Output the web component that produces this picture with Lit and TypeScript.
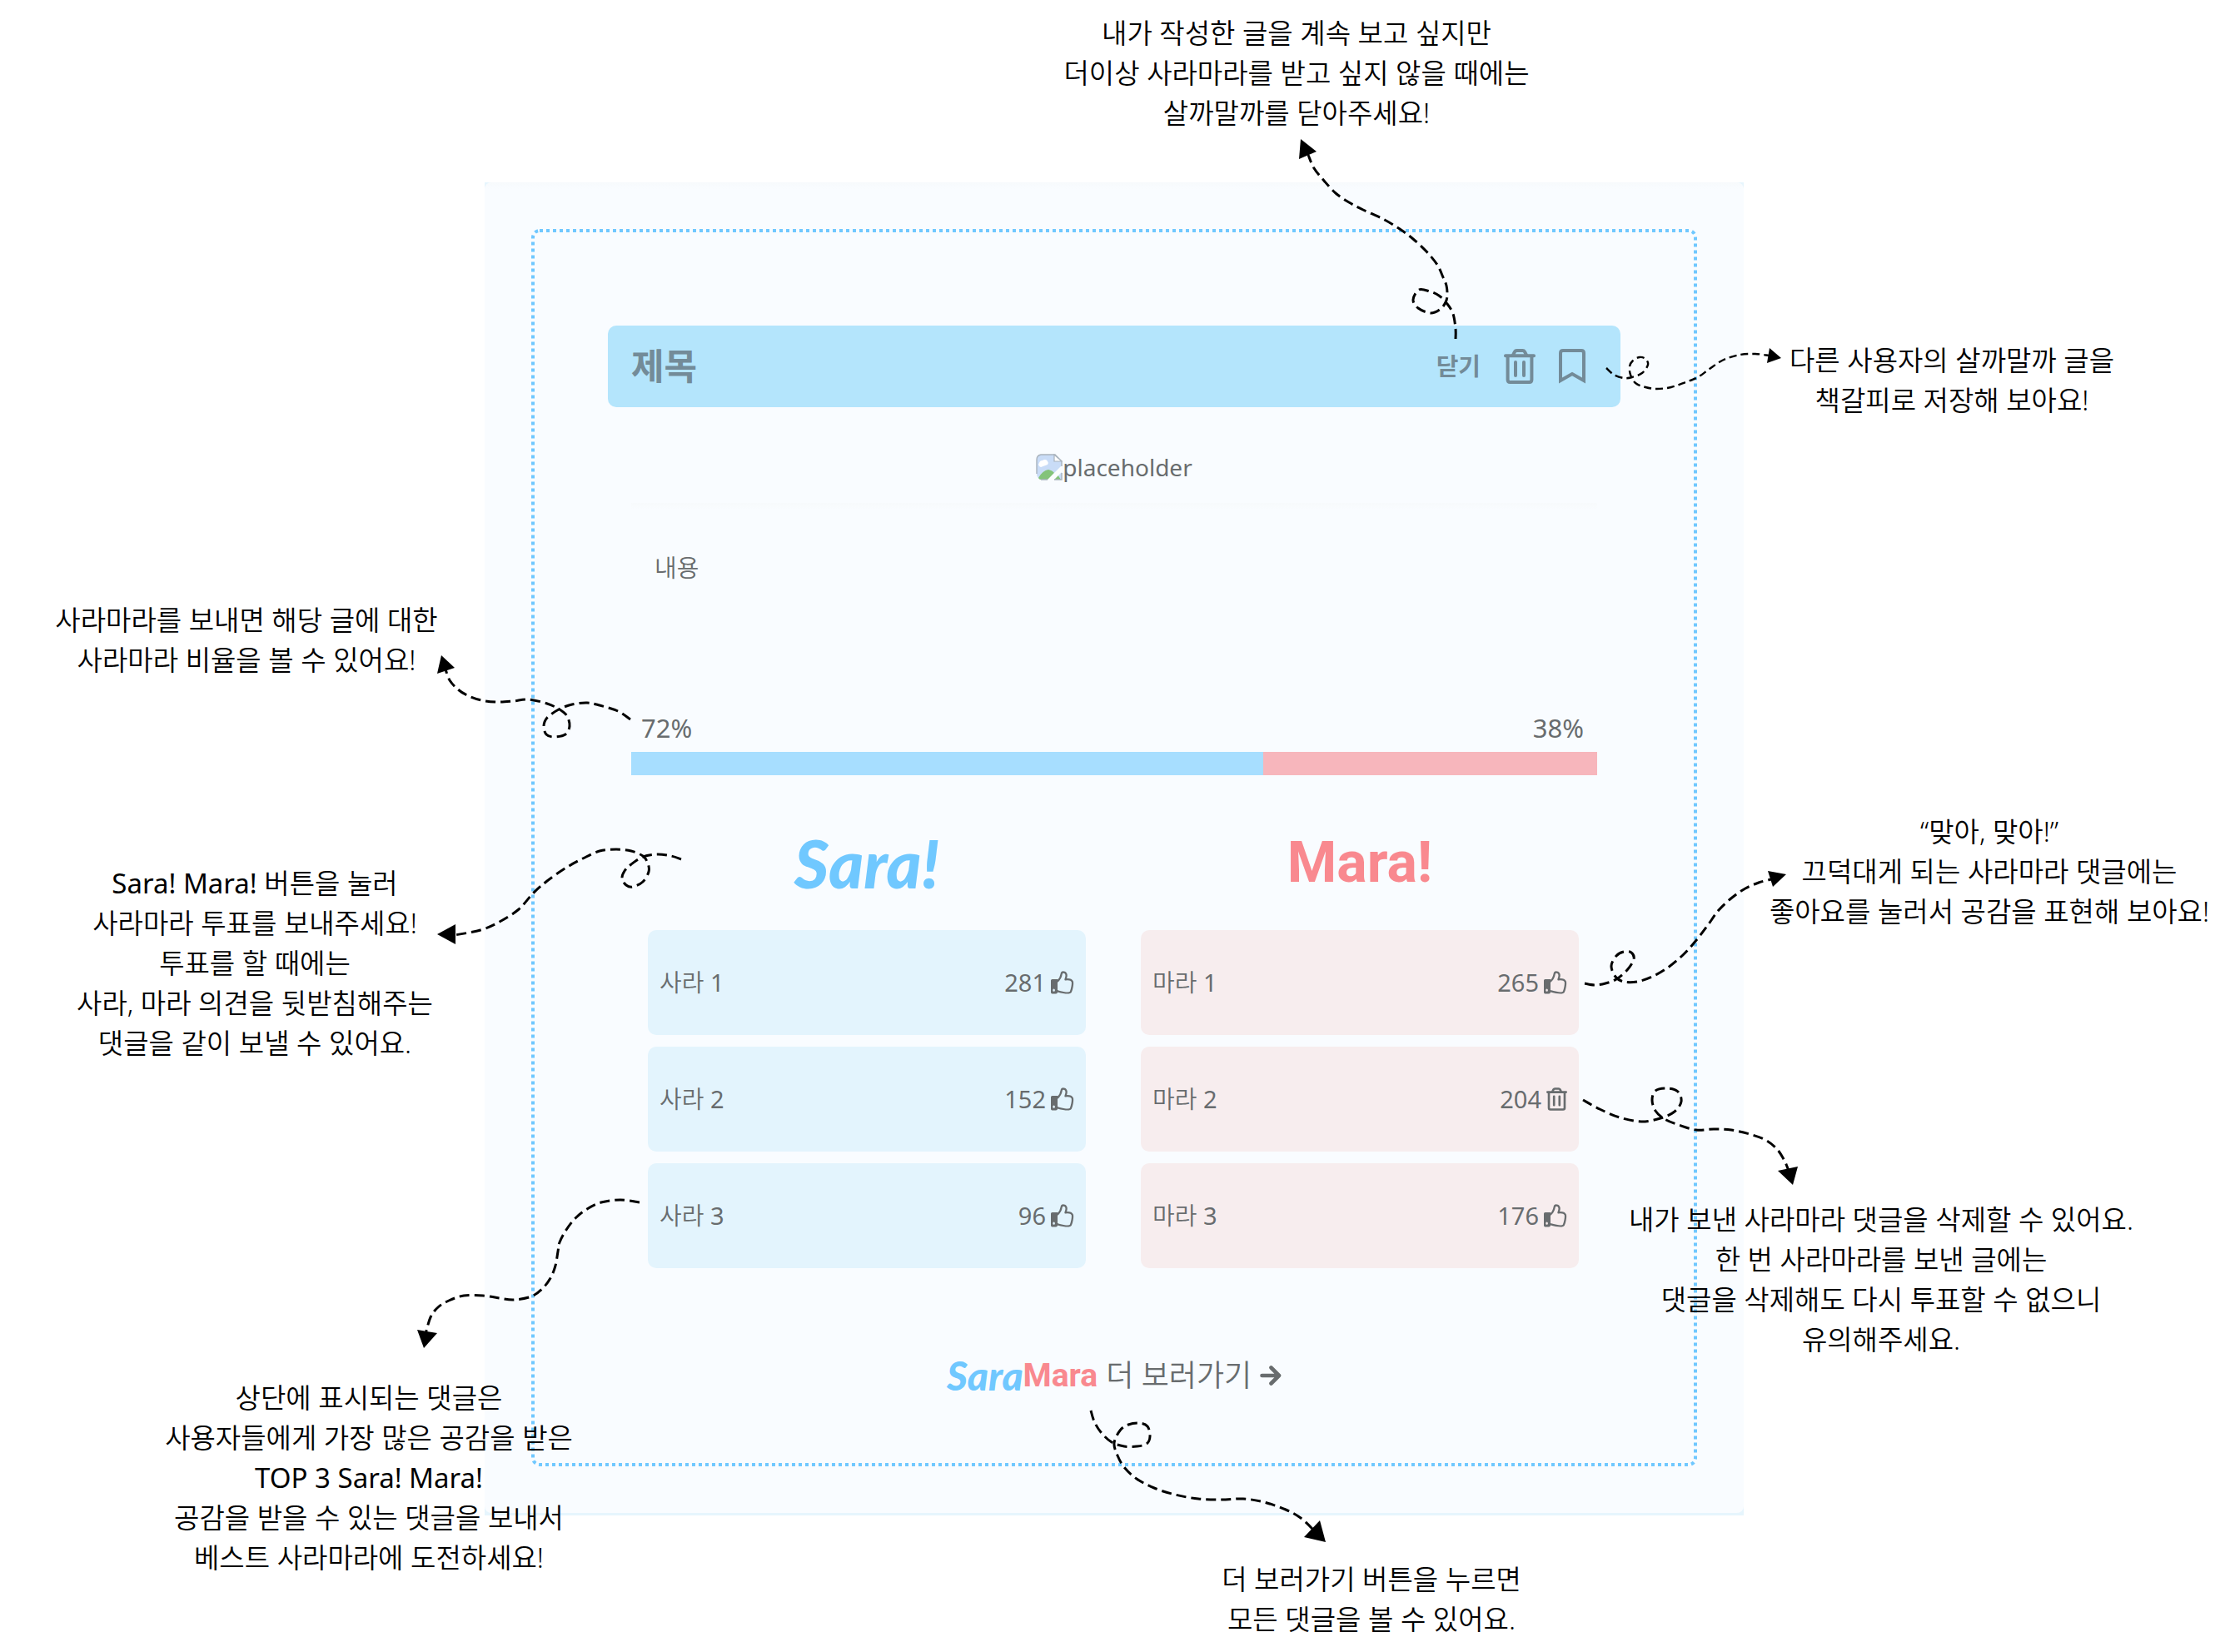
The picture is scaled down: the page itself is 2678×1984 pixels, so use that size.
import { LitElement, html, svg, css } from "lit";
import { customElement, property } from "lit/decorators.js";

type Point = [number, number];

interface Callout {
  x: number;
  y: number;
  lines: string[];
}

interface Arrow {
  points: Point[];
  head: Point[];
  fine?: boolean;
}

interface Reply {
  text: string;
  count: number;
  own?: boolean;
}

// Callout and arrow coordinates: x from the page's centre line, y from its top.
const MID = 1339;

const callouts: Callout[] = [
  { x: 1557, y: 16, lines: ["내가 작성한 글을 계속 보고 싶지만", "더이상 사라마라를 받고 싶지 않을 때에는", "살까말까를 닫아주세요!"] },
  { x: 2344, y: 409, lines: ["다른 사용자의 살까말까 글을", "책갈피로 저장해 보아요!"] },
  { x: 296, y: 721, lines: ["사라마라를 보내면 해당 글에 대한", "사라마라 비율을 볼 수 있어요!"] },
  { x: 306, y: 1037, lines: ["Sara! Mara! 버튼을 눌러", "사라마라 투표를 보내주세요!", "투표를 할 때에는", "사라, 마라 의견을 뒷받침해주는", "댓글을 같이 보낼 수 있어요."] },
  { x: 2389, y: 975, lines: ["“맞아, 맞아!”", "끄덕대게 되는 사라마라 댓글에는", "좋아요를 눌러서 공감을 표현해 보아요!"] },
  { x: 2259, y: 1441, lines: ["내가 보낸 사라마라 댓글을 삭제할 수 있어요.", "한 번 사라마라를 보낸 글에는", "댓글을 삭제해도 다시 투표할 수 없으니", "유의해주세요."] },
  { x: 443, y: 1655, lines: ["상단에 표시되는 댓글은", "사용자들에게 가장 많은 공감을 받은", "TOP 3 Sara! Mara!", "공감을 받을 수 있는 댓글을 보내서", "베스트 사라마라에 도전하세요!"] },
  { x: 1647, y: 1873, lines: ["더 보러가기 버튼을 누르면", "모든 댓글을 볼 수 있어요."] },
];

const arrows: Arrow[] = [
  {
    points: [[1748, 407], [1748, 395], [1745, 377], [1738, 365], [1728, 355], [1717, 350], [1704, 348], [1697, 360], [1703, 370], [1718, 376], [1730, 371], [1736, 363], [1738, 355], [1737, 343], [1733, 333], [1726, 318], [1713, 302], [1697, 287], [1681, 275], [1661, 263], [1637, 252], [1620, 243], [1604, 232], [1590, 217], [1578, 202], [1571, 186]],
    head: [[1562, 167], [1581, 182], [1560, 191]],
  },
  {
    points: [[1929, 442], [1938, 450], [1950, 454], [1960, 453], [1972, 448], [1979, 438], [1976, 431], [1969, 429], [1961, 433], [1957, 440], [1958, 450], [1964, 460], [1976, 465], [1990, 467], [2007, 465], [2024, 459], [2039, 453], [2053, 443], [2070, 432], [2090, 426], [2108, 425], [2124, 427]],
    head: [[2139, 430], [2125, 418], [2122, 436]],
    fine: true,
  },
  {
    points: [[757, 864], [742, 854], [720, 847], [705, 844], [687, 846], [671, 852], [657, 862], [653, 872], [656, 882], [665, 885], [679, 882], [684, 872], [681, 860], [672, 852], [657, 845], [635, 840], [616, 842], [597, 843], [578, 841], [561, 835], [550, 828], [540, 817], [535, 804]],
    head: [[530, 787], [546, 802], [525, 809]],
  },
  {
    points: [[818, 1032], [806, 1028], [789, 1026], [772, 1029], [758, 1038], [750, 1046], [747, 1055], [752, 1063], [760, 1065], [772, 1059], [779, 1047], [778, 1037], [772, 1028], [758, 1022], [740, 1020], [720, 1022], [700, 1031], [680, 1042], [657, 1058], [640, 1073], [623, 1092], [600, 1107], [577, 1117], [546, 1123]],
    head: [[525, 1122], [547, 1110], [547, 1134]],
  },
  {
    points: [[1903, 1181], [1915, 1183], [1928, 1181], [1941, 1176], [1954, 1165], [1962, 1152], [1959, 1144], [1950, 1143], [1941, 1148], [1935, 1160], [1940, 1173], [1950, 1179], [1966, 1179], [1984, 1173], [2003, 1162], [2022, 1146], [2038, 1128], [2051, 1111], [2064, 1093], [2080, 1078], [2096, 1067], [2112, 1060], [2127, 1056]],
    head: [[2145, 1050], [2123, 1046], [2129, 1065]],
  },
  {
    points: [[1901, 1321], [1921, 1332], [1945, 1342], [1971, 1347], [1994, 1343], [2011, 1335], [2019, 1323], [2015, 1311], [2002, 1307], [1988, 1310], [1984, 1321], [1988, 1334], [1999, 1344], [2016, 1351], [2037, 1357], [2058, 1356], [2079, 1357], [2101, 1362], [2120, 1369], [2134, 1380], [2143, 1394], [2148, 1406]],
    head: [[2153, 1423], [2135, 1406], [2159, 1401]],
  },
  {
    points: [[768, 1444], [745, 1441], [722, 1444], [705, 1452], [691, 1463], [680, 1477], [672, 1492], [670, 1503], [667, 1520], [661, 1535], [651, 1548], [638, 1557], [617, 1561], [600, 1559], [580, 1556], [557, 1556], [539, 1562], [526, 1570], [517, 1582], [511, 1602]],
    head: [[509, 1619], [501, 1597], [525, 1601]],
  },
  {
    points: [[1310, 1694], [1314, 1707], [1322, 1720], [1335, 1732], [1350, 1737], [1365, 1737], [1377, 1734], [1381, 1725], [1378, 1713], [1368, 1709], [1355, 1711], [1345, 1718], [1338, 1733], [1342, 1748], [1350, 1762], [1365, 1776], [1386, 1787], [1411, 1795], [1439, 1800], [1467, 1801], [1493, 1800], [1518, 1804], [1544, 1813], [1562, 1823], [1578, 1838]],
    head: [[1592, 1852], [1585, 1826], [1566, 1846]],
  },
];

// Smooth cubic path through every point of the list.
function curve(points: Point[]): string {
  const at = (i: number) => points[Math.max(0, Math.min(points.length - 1, i))];
  let d = `M${points[0].join(" ")}`;
  for (let i = 0; i < points.length - 1; i++) {
    const [a, b, c, e] = [at(i - 1), at(i), at(i + 1), at(i + 2)];
    d += `C${b[0] + (c[0] - a[0]) / 6} ${b[1] + (c[1] - a[1]) / 6} ${c[0] - (e[0] - b[0]) / 6} ${c[1] - (e[1] - b[1]) / 6} ${c[0]} ${c[1]}`;
  }
  return d;
}

// Latin words and digits take the regular weight beside the lighter Hangul.
function mixed(text: string) {
  return text
    .split(/([A-Za-z0-9][A-Za-z0-9! ]*)/)
    .map((part, i) => (i % 2 ? html`<span class="latin">${part}</span>` : part));
}

const trashIcon = html`<svg class="trash" viewBox="0 0 38 42" aria-hidden="true">
  <g fill="none" stroke="currentColor" stroke-width="4" stroke-linejoin="round" stroke-linecap="round">
    <path d="M2 8.2H36" />
    <path d="M11 7.5L13 3.4Q13.8 2 15.4 2H22.6Q24.2 2 25 3.4L27 7.5" />
    <path d="M4.6 9V37Q4.6 40 7.4 40H30.6Q33.4 40 33.4 37V9" />
    <path d="M14 16V32M24 16V32" />
  </g>
</svg>`;

const bookmarkIcon = html`<svg class="bookmark" viewBox="0 0 32 42" aria-hidden="true">
  <path d="M2 38V5Q2 2 5 2H27Q30 2 30 5V38L16 30Z" fill="none" stroke="currentColor" stroke-width="4" />
</svg>`;

const thumbIcon = html`<svg class="thumb" viewBox="0 0 28 28" aria-hidden="true">
  <path fill="currentColor" fill-rule="evenodd" d="M1.6 10H8V25.4Q8 27.4 6 27.4H1.6Q0 27.4 0 25.8V11.6Q0 10 1.6 10ZM3.6 21.6A1.3 1.6 0 1 0 3.6 24.8A1.3 1.6 0 1 0 3.6 21.6Z" />
  <path fill="none" stroke="currentColor" stroke-width="2.3" stroke-linejoin="round" d="M7 13.3C10 11 12 8 12.7 3.6C13.2 .6 17.6 .8 18.5 4.4C19 6.8 17.8 8.8 17.5 10.3C20 10 24.6 10.2 25.8 12.9C26.6 15.6 25 23 23.8 25.2C22.5 27.6 17 26.8 7.5 24.2" />
</svg>`;

const missingImage = html`<svg class="missing" viewBox="0 0 32 32" aria-hidden="true">
  <path d="M6 1H23L31 9V31H6Q1 29 1 24V7Q1 2 6 1Z" fill="#c9dcf7" />
  <path d="M6 16A3 3 0 0 1 4 11A4 4 0 0 1 8 8A4 4 0 0 1 14 9A3 3 0 0 1 14 13Z" fill="#fff" />
  <path d="M3 29Q8 20 15 19Q20 20 22 23L15 31H6Q4 31 3 29ZM20 31L26 25L30 31Z" fill="#83c37a" />
  <path d="M14 31L31 14V22L22 31Z" fill="#fafdff" />
  <path d="M1 24V7Q1 2 6 1H23L31 9V15M6 31H14M22 31H31V23" fill="none" stroke="#a9b3bd" stroke-width="1.4" />
  <path d="M22 1V9H31Z" fill="#fff" stroke="#a9b3bd" stroke-width="1.2" />
</svg>`;

@customElement("reply-list")
class ReplyList extends LitElement {
  @property({ attribute: false }) replies: Reply[] = [];
  @property() tone = "sara";

  static styles = css`
    :host { display: block; }
    .list { display: flex; flex-direction: column; gap: 14px; margin: 0; padding: 0; list-style: none; }
    .row {
      display: flex; align-items: center; justify-content: space-between;
      padding: 42px 14px; border-radius: 10px; line-height: 42px;
    }
    .sara { background: #e3f4fd; }
    .mara { background: #f7edee; }
    .act {
      display: flex; align-items: center; gap: 6px; margin: 0; padding: 0;
      border: 0; background: none; color: inherit; font: inherit; line-height: 42px; cursor: pointer;
    }
    .latin { font-weight: 400; }
    .thumb { width: 28px; height: 28px; }
    .trash { width: 25px; height: 28px; }
  `;

  render() {
    return html`<ul class="list">
      ${this.replies.map(
        (r) => html`<li class="row ${this.tone}">
          <span>${mixed(r.text)}</span>
          <button class="act" type="button" aria-label="${r.own ? "삭제" : "좋아요"} ${r.count}">
            <span class="latin">${r.count}</span>${r.own ? trashIcon : thumbIcon}
          </button>
        </li>`
      )}
    </ul>`;
  }
}

@customElement("app-root")
class AppRoot extends LitElement {
  private votes = { sara: 72, mara: 38 };

  private sara: Reply[] = [
    { text: "사라 1", count: 281 },
    { text: "사라 2", count: 152 },
    { text: "사라 3", count: 96 },
  ];

  private mara: Reply[] = [
    { text: "마라 1", count: 265 },
    { text: "마라 2", count: 204, own: true },
    { text: "마라 3", count: 176 },
  ];

  static styles = css`
    :host {
      display: block; position: relative; overflow: hidden;
      box-sizing: border-box; padding: 219px 2px 164px 0;
      background: #fff; color: #686c6e;
      font-family: "Noto Sans", "Noto Sans CJK KR", sans-serif;
      font-size: 29px; font-weight: 350; line-height: 42px;
    }
    button { margin: 0; padding: 0; border: 0; background: none; color: inherit; font: inherit; cursor: pointer; }
    .latin { font-weight: 400; }
    .back { max-width: 1512px; margin: 0 auto; background: #e6f5fd; }
    .panel {
      padding: 56px; border-radius: 8px;
      background: linear-gradient(#f7fafc, #f9fcff 8px);
    }
    .edge { height: 3px; }
    .frame { position: relative; padding: 116px 92px 85px; }
    .dots { position: absolute; inset: 2px; width: calc(100% - 4px); height: calc(100% - 4px); overflow: visible; }
    .bar {
      display: flex; align-items: center; justify-content: space-between;
      padding: 28px 42px 28px 28px; border-radius: 10px;
      background: #b4e5fc; color: #738b98; font-weight: 700;
    }
    .title { margin: 0; font-size: 43px; line-height: 42px; font-weight: 700; }
    .tools { display: flex; align-items: center; gap: 28px; }
    .tools button { display: flex; }
    .tools .trash { width: 38px; height: 42px; }
    .tools .bookmark { width: 32px; height: 42px; }
    .picture { display: flex; justify-content: center; align-items: center; height: 48px; margin-top: 48px; font-size: 28px; }
    .missing { width: 32px; height: 32px; }
    .inner { margin: 0 28px; }
    .body {
      min-height: 135px; margin-top: 19px; padding: 57px 28px;
      background: linear-gradient(#f7fafc, #f9fcff 8px) no-repeat;
    }
    .body p { margin: 0; }
    .share { display: flex; justify-content: space-between; padding: 0 16px 8px 12px; font-size: 31px; font-weight: 400; }
    .meter { display: flex; height: 28px; }
    .part-sara { background: #a7deff; }
    .part-mara { background: #f7b6bc; }
    .columns { display: grid; grid-template-columns: 1fr 1fr; gap: 66px; padding: 57px 50px 0 48px; }
    .column { display: flex; flex-direction: column; gap: 33px; }
    .vote { align-self: center; line-height: 96px; }
    .name-sara { color: #70c8ff; font-family: Lato, sans-serif; font-style: italic; font-weight: 900; font-size: 80px; }
    .name-mara { color: #f9898f; font-family: Roboto, sans-serif; font-weight: 700; font-size: 68px; }
    .more {
      display: flex; align-items: center; justify-content: center; width: fit-content;
      margin: 105px auto 0; color: inherit; text-decoration: none; font-size: 36px; line-height: 48px;
    }
    .more .name-sara { font-size: 48px; }
    .more .name-mara { font-size: 39px; margin-right: 10px; }
    .go { width: 26px; height: 26px; margin-left: 10px; }
    .callout {
      position: absolute; margin: 0; transform: translateX(-50%);
      color: #000; font-size: 33px; line-height: 48px;
      text-align: center; white-space: nowrap;
    }
    .line { display: block; }
    .arrows { position: absolute; top: 0; left: 50%; width: 1px; height: 1px; overflow: visible; pointer-events: none; }
  `;

  render() {
    const { sara, mara } = this.votes;
    return html`
      <main class="back">
        <div class="panel">
          <article class="frame">
            <svg class="dots" aria-hidden="true">
              <rect width="100%" height="100%" rx="8" fill="none" stroke="#70c8ff" stroke-width="4" stroke-dasharray="4 4" />
            </svg>
            <header class="bar">
              <h1 class="title">제목</h1>
              <div class="tools">
                <button type="button">닫기</button>
                <button type="button" aria-label="삭제">${trashIcon}</button>
                <button type="button" aria-label="책갈피">${bookmarkIcon}</button>
              </div>
            </header>
            <div class="picture">${missingImage}<span class="latin">placeholder</span></div>
            <div class="inner">
              <div class="body"><p>내용</p></div>
              <div class="share"><span>${sara}%</span><span>${mara}%</span></div>
              <div class="meter">
                <div class="part-sara" style="flex: ${sara}"></div>
                <div class="part-mara" style="flex: ${mara}"></div>
              </div>
            </div>
            <div class="columns">
              <section class="column">
                <button class="vote name-sara" type="button">Sara!</button>
                <reply-list tone="sara" .replies=${this.sara}></reply-list>
              </section>
              <section class="column">
                <button class="vote name-mara" type="button">Mara!</button>
                <reply-list tone="mara" .replies=${this.mara}></reply-list>
              </section>
            </div>
            <a class="more" href="#more">
              <span class="name-sara">Sara</span><span class="name-mara">Mara</span><span>더 보러가기</span>
              <svg class="go" viewBox="0 0 26 26" aria-hidden="true">
                <path d="M2.5 13H22M13.5 3.5L23 13L13.5 22.5" fill="none" stroke="currentColor" stroke-width="4.6" stroke-linecap="round" stroke-linejoin="round" />
              </svg>
            </a>
          </article>
        </div>
        <div class="edge"></div>
      </main>
      <svg class="arrows" aria-hidden="true">
        <g transform="translate(${-MID} 0)">
          ${arrows.map(
            (a) => svg`
              <path d=${curve(a.points)} fill="none" stroke="#000" stroke-width=${a.fine ? 2.4 : 3} stroke-dasharray=${a.fine ? "9 5" : "12 6"} />
              <polygon points=${a.head.map((p) => p.join(",")).join(" ")} />
            `
          )}
        </g>
      </svg>
      ${callouts.map(
        (c) => html`<p class="callout" style="left: calc(50% + ${c.x - MID}px); top: ${c.y}px">
          ${c.lines.map((l) => html`<span class="line">${mixed(l)}</span>`)}
        </p>`
      )}
    `;
  }
}
